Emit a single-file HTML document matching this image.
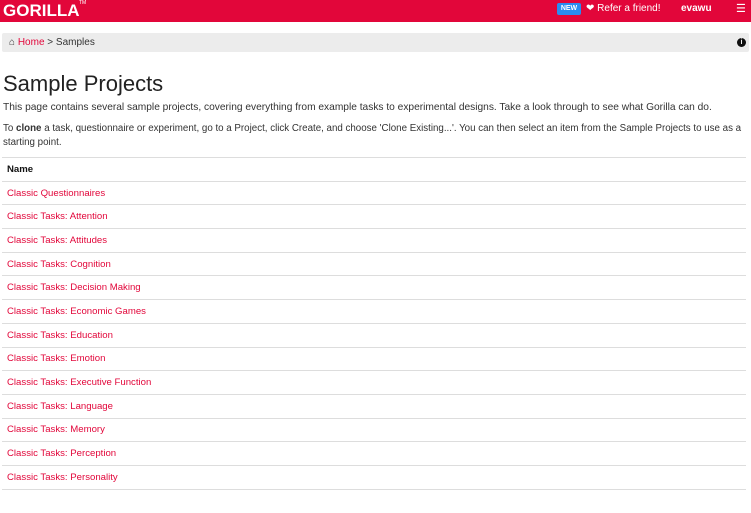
<!DOCTYPE html>
<html><head><style>
*{margin:0;padding:0;box-sizing:border-box}
body{width:751px;height:494px;overflow:hidden;background:#fff;font-family:"Liberation Sans",sans-serif;color:#333;position:relative}
.hdr{position:absolute;left:0;top:0;width:751px;height:22px;background:#e2063a}
.logo{position:absolute;left:3px;top:1px;color:#fff;font-weight:bold;font-size:17px;letter-spacing:0}
.tm{position:absolute;left:79px;top:0;color:#fff;font-size:5px}
.new{position:absolute;left:557px;top:3px;width:24px;height:12px;background:#2a8cf0;border-radius:2px;color:#fff;font-size:7px;font-weight:bold;text-align:center;line-height:12px}
.ref{position:absolute;left:586px;top:3px;color:#fff;font-size:10px;line-height:12px}
.user{position:absolute;left:681px;top:3px;color:#fff;font-size:10px;font-weight:bold;line-height:12px}
.menu{position:absolute;left:736px;top:4px;color:#fff;font-size:11px;line-height:10px}
.bc{position:absolute;left:2px;top:33px;width:747px;height:19px;background:#ececec;border-radius:2px;font-size:10px;line-height:19px;padding-left:7px}
.bc a{color:#e2063a;text-decoration:none}
.info{position:absolute;right:3px;top:5px;width:9px;height:9px;border-radius:50%;background:#111;color:#fff;font-size:7px;line-height:9px;text-align:center;font-weight:bold}
h1{position:absolute;left:3px;top:71px;font-size:22px;font-weight:normal;color:#222}
.p1{position:absolute;left:3px;top:102px;font-size:10.2px;white-space:nowrap}
.p2{position:absolute;left:3px;top:122px;font-size:9.75px;line-height:14px;width:746px}
table{position:absolute;left:2px;top:157px;width:744px;border-collapse:collapse;font-size:9.6px}
td,th{border-top:1px solid #ddd;height:23.7px;text-align:left;padding-left:5px}
th{font-weight:bold;color:#111;border-bottom:1px solid #ddd}
td{color:#e2063a}
</style></head><body>
<div class="hdr"><div class="logo">GORILLA</div><div class="tm">TM</div>
<div class="new">NEW</div><div class="ref">&#10084; Refer a friend!</div><div class="user">evawu</div><div class="menu">&#9776;</div></div>
<div class="bc">&#8962; <a>Home</a> &gt; Samples<div class="info">i</div></div>
<h1>Sample Projects</h1>
<div class="p1">This page contains several sample projects, covering everything from example tasks to experimental designs. Take a look through to see what Gorilla can do.</div>
<div class="p2">To <b>clone</b> a task, questionnaire or experiment, go to a Project, click Create, and choose 'Clone Existing...'. You can then select an item from the Sample Projects to use as a<br>starting point.</div>
<table>
<tr><th>Name</th></tr>
<tr><td>Classic Questionnaires</td></tr>
<tr><td>Classic Tasks: Attention</td></tr>
<tr><td>Classic Tasks: Attitudes</td></tr>
<tr><td>Classic Tasks: Cognition</td></tr>
<tr><td>Classic Tasks: Decision Making</td></tr>
<tr><td>Classic Tasks: Economic Games</td></tr>
<tr><td>Classic Tasks: Education</td></tr>
<tr><td>Classic Tasks: Emotion</td></tr>
<tr><td>Classic Tasks: Executive Function</td></tr>
<tr><td>Classic Tasks: Language</td></tr>
<tr><td>Classic Tasks: Memory</td></tr>
<tr><td>Classic Tasks: Perception</td></tr>
<tr><td>Classic Tasks: Personality</td></tr>
<tr><td>&nbsp;</td></tr>
</table>
</body></html>
